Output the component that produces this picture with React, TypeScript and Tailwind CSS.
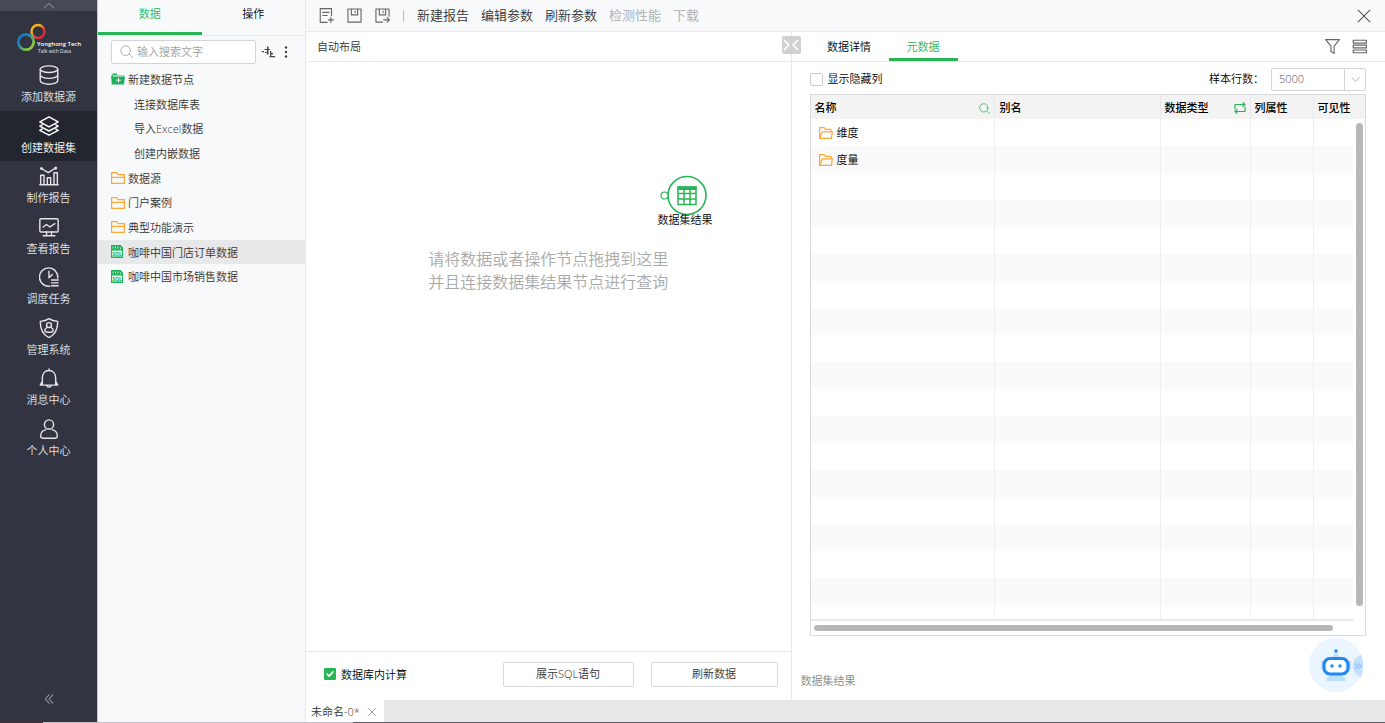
import { useState } from 'react';
import type { ReactNode } from 'react';
import clsx from 'clsx';

type IconProps = { children: ReactNode; className?: string };

// Shared 24x24 outline icon
function Icon({ children, className = 'size-5' }: IconProps) {
  return (
    <svg
      viewBox="0 0 24 24"
      className={className}
      fill="none"
      stroke="currentColor"
      strokeWidth="1.7"
      strokeLinecap="round"
      strokeLinejoin="round"
      aria-hidden="true"
    >
      {children}
    </svg>
  );
}

const navItems = [
  {
    label: '添加数据源',
    icon: (
      <>
        <ellipse cx="12" cy="5" rx="10.5" ry="4" />
        <path d="M1.5 5v14c0 2.200 4.700 4 10.500 4s10.500-1.800 10.500-4V5" />
        <path d="M1.500 12c0 2.200 4.700 4 10.500 4s10.500-1.800 10.500-4" />
      </>
    ),
  },
  {
    label: '创建数据集',
    icon: (
      <>
        <path d="M12 1 23 7 12 13 1 7z" />
        <path d="m4 10.500-3 1.700L12 18l11-5.800-3-1.700" />
        <path d="m4 15.500-3 1.700L12 23l11-5.800-3-1.700" />
      </>
    ),
  },
  {
    label: '制作报告',
    icon: (
      <>
        <path d="M2 22V11h4v11M10 22v-8h4v8M18 22V8h4v14M1 22.500h22" />
        <path d="m3 3 8 5 8-5" />
        <circle cx="3" cy="3" r="1" />
        <circle cx="20" cy="2.500" r="1" />
      </>
    ),
  },
  {
    label: '查看报告',
    icon: (
      <>
        <rect x="1" y="2" width="22" height="16" rx="1.500" />
        <path d="m5 12 4-3 4 3 6-4M9 18v4M15 18v4M5 22.500h14" />
      </>
    ),
  },
  {
    label: '调度任务',
    icon: (
      <>
        <path d="M13 23A11 11 0 1 1 22.500 13" />
        <path d="M12 5v8l4-4M15 15.500h8M15 19h8M15 22.500h8" />
      </>
    ),
  },
  {
    label: '管理系统',
    icon: (
      <>
        <path d="M12 .8c3 2.200 6.500 3 10.500 3.200 0 9-2.500 16-10.500 19.500C4 20 1.500 13 1.500 4 5.500 3.800 9 3 12 .8z" />
        <circle cx="12" cy="8.500" r="3" />
        <path d="M9.500 11.500c-3 1-3.500 5 0 5.500h5c3.500-.5 3-4.500 0-5.500" />
      </>
    ),
  },
  {
    label: '消息中心',
    icon: (
      <>
        <path d="M12 1v2M4 20V12c0-5 3-9 8-9s8 4 8 9v8M4 16l-2.500 4.500h21L20 16M9.500 20.500c0 3.300 5 3.300 5 0" />
      </>
    ),
  },
  {
    label: '个人中心',
    icon: (
      <>
        <circle cx="12" cy="6.500" r="5.500" />
        <path d="M8 13c-4 .6-6 4-6 7.500 0 1.500.8 2.500 2.500 2.500h15c1.700 0 2.500-1 2.500-2.500 0-3.500-2-6.900-6-7.500" />
      </>
    ),
  },
];

function Logo() {
  return (
    <svg viewBox="0 0 66 32" className="h-8 w-[66px]" role="img" aria-label="Yonghong Tech">
      <defs>
        <linearGradient id="warm" x1="0" y1="0" x2="1" y2="1">
          <stop offset="0.3" stopColor="#f5b51b" />
          <stop offset="0.7" stopColor="#e5293f" />
        </linearGradient>
        <linearGradient id="cool" x1="0" y1="0" x2="1" y2="1">
          <stop offset="0.3" stopColor="#1381bd" />
          <stop offset="0.8" stopColor="#8dc63f" />
        </linearGradient>
      </defs>
      <circle cx="22" cy="8.500" r="6.500" fill="none" stroke="url(#warm)" strokeWidth="2.400" />
      <circle cx="10" cy="19" r="7.700" fill="none" stroke="url(#cool)" strokeWidth="2.800" />
      <text x="21" y="23" fontSize="6" fontWeight="600" fill="#fff">Yonghong Tech</text>
      <text x="22" y="30" fontSize="5" fontWeight="400" fill="#e3e4e6">Talk with Data</text>
    </svg>
  );
}

function SideNav() {
  return (
    <aside className="flex w-[98px] shrink-0 flex-col border-r border-[#c4c6cb] bg-[#323541] text-[#e3e4e6]">
      <button type="button" aria-label="向上" className="flex h-[11px] shrink-0 items-center justify-center bg-[#474a55] text-[#9b9da4]">
        <Icon className="h-3 w-3"><path d="m2 16 10-9 10 9" strokeWidth="2" /></Icon>
      </button>
      <div className="flex h-[49px] shrink-0 justify-center pt-3">
        <Logo />
      </div>
      <nav className="grid h-[404px] shrink-0 grid-rows-8">
        {navItems.map((item) => (
          <a
            key={item.label}
            href="#"
            className={clsx(
              'flex flex-col items-center pt-[3px] text-[11px] leading-5',
              item.label === '创建数据集' && 'bg-[#24262f] text-white',
            )}
          >
            <span className="flex h-6 items-center"><Icon>{item.icon}</Icon></span>
            {item.label}
          </a>
        ))}
      </nav>
      <button type="button" aria-label="收起" className="mt-auto mb-[18px] flex justify-center text-[#9b9da4]">
        <Icon className="size-[10px]"><path d="m12 2-9 10 9 10M21 2l-9 10 9 10" strokeWidth="2.500" /></Icon>
      </button>
    </aside>
  );
}

function FolderIcon() {
  return (
    <svg viewBox="0 0 14 12" className="h-3 w-[14px]" fill="none" stroke="#f9a83a" aria-hidden="true">
      <path d="M.6 11.400V.6h5l1.500 2h6.300v8.800zM.6 5.400h12.800" strokeWidth="1.200" />
    </svg>
  );
}

function OpenFolderIcon() {
  return (
    <svg viewBox="0 0 14 12" className="h-3 w-[14px]" fill="none" stroke="#f9a83a" aria-hidden="true">
      <path d="M.6 11.400V.6h4.500l1.500 1.800h5.300v2.400M.8 11.400l2.400-6.600h10.200l-1 6.600z" strokeWidth="1.200" />
    </svg>
  );
}

function NewFolderIcon() {
  return (
    <svg viewBox="0 0 14 12" className="h-3 w-[14px]" aria-hidden="true">
      <path d="M0 2.500h1.500V.5h4l1 1.500h6v1.500H14L13 11.500H.8z" fill="#1fb25a" />
      <path d="M2 3h10M7.500 5v4.500M5.200 7.200h4.600" stroke="#fff" strokeWidth="1" />
    </svg>
  );
}

function SqlIcon() {
  return (
    <svg viewBox="0 0 24 26" className="h-[13px] w-3" aria-hidden="true">
      <path d="M0 0h19l5 5v21H0z" fill="#1fb25a" />
      <path d="M4 3v4M9 3v4M14 3v4M19 5v3" stroke="#fff" strokeWidth="1.500" />
      <path d="M2 11h20v12H2z" fill="#e3f6ea" />
      <text x="12" y="21" fontSize="10" fontWeight="700" textAnchor="middle" fill="#1fb25a">SQL</text>
    </svg>
  );
}

const treeRows = [
  { label: '新建数据节点', icon: <NewFolderIcon /> },
  { label: '连接数据库表' },
  { label: '导入Excel数据' },
  { label: '创建内嵌数据' },
  { label: '数据源', icon: <FolderIcon /> },
  { label: '门户案例', icon: <FolderIcon /> },
  { label: '典型功能演示', icon: <FolderIcon /> },
  { label: '咖啡中国门店订单数据', icon: <SqlIcon />, active: true },
  { label: '咖啡中国市场销售数据', icon: <SqlIcon /> },
];

function DataPanel() {
  return (
    <section className="flex w-[208px] shrink-0 flex-col border-r border-[#e6e8eb] bg-[#f8f9fb]">
      <div className="flex h-9 border-b border-[#e6e8eb] text-[11px]">
        <button type="button" className="w-1/2 border-b-[3px] border-[#27b556] pb-1 text-[#27b556]">数据</button>
        <button type="button" className="w-1/2 pb-[7px] text-black">操作</button>
      </div>
      <div className="flex h-[31px] items-center pl-[13px]">
        <label className="flex h-6 w-[145px] items-center gap-1 rounded-xs border border-[#d2d4d7] bg-white pl-2 text-[#aaa]">
          <Icon className="size-[13px] shrink-0"><circle cx="10.500" cy="10.500" r="9" /><path d="m17 17 6 6" /></Icon>
          <input type="text" aria-label="搜索" placeholder="输入搜索文字" className="w-full pt-px text-[11px] outline-none placeholder:text-[#a0a0a0]" />
        </label>
        <button type="button" aria-label="定位" className="ml-[6px] text-[#444]">
          <svg viewBox="0 0 13 12" className="h-3 w-[13px]" fill="currentColor" aria-hidden="true">
            <path d="M5 .5h1.500V3H8v1H6.500v4.500H5V7H3V6h2V4H2.500V3H5zM0 5h2v1.300H0zM8 5h1.300v2H11v1.200H9.300V10H13v1.300H7.500V10H8z" />
          </svg>
        </button>
        <button type="button" aria-label="更多" className="ml-[9px] text-[#444]">
          <svg viewBox="0 0 4 12" className="h-3 w-1" fill="currentColor" aria-hidden="true">
            <circle cx="2" cy="1.500" r="1.200" /><circle cx="2" cy="6" r="1.200" /><circle cx="2" cy="10.500" r="1.200" />
          </svg>
        </button>
      </div>
      <ul className="grid h-[222px] grid-rows-9 text-[11px] text-[#333]">
        {treeRows.map((row) => (
          <li key={row.label} className={clsx('flex items-center gap-[3px]', row.icon ? 'pl-[13px]' : 'pl-9', row.active && 'bg-[#e7e8ea]')}>
            {row.icon && <span className="flex w-[14px]">{row.icon}</span>}
            <span className="pt-[2px]">{row.label}</span>
          </li>
        ))}
      </ul>
    </section>
  );
}

function Toolbar() {
  return (
    <header className="flex h-8 shrink-0 items-center border-b border-[#e6e8eb] bg-[#f8f9fb] pr-[14px] pl-[13px] text-[13px] text-[#333]">
      <div className="flex items-center gap-[13px] text-[#666]">
        <button type="button" aria-label="新建">
          <Icon className="size-[15px]"><path d="M20 12V1H2v22h11M6 7h10M6 12h7M19 15v8M15 19h8" strokeWidth="1.800" /></Icon>
        </button>
        <button type="button" aria-label="保存">
          <Icon className="size-[15px]"><path d="M1.500 1.500h21v21h-21zM7 2v9h10V2M13 5v2" strokeWidth="1.800" /></Icon>
        </button>
        <button type="button" aria-label="另存为">
          <Icon className="size-[15px]"><path d="M22.500 13V1.500h-21v21H12M7 2v9h10V2M13 5v2M14 19h9M19.500 15.500 23 19l-3.500 3.500" strokeWidth="1.800" /></Icon>
        </button>
      </div>
      <span className="mx-[13px] h-3 w-px bg-[#b5b7ba]" />
      <div className="flex gap-3">
        <button type="button">新建报告</button>
        <button type="button">编辑参数</button>
        <button type="button">刷新参数</button>
        <button type="button" disabled className="text-[#aaacaf]">检测性能</button>
        <button type="button" disabled className="text-[#aaacaf]">下载</button>
      </div>
      <button type="button" aria-label="关闭" className="ml-auto text-[#555]">
        <Icon className="size-[14px]"><path d="m2 2 20 20M22 2 2 22" strokeWidth="1.800" /></Icon>
      </button>
    </header>
  );
}

function Canvas() {
  const [inDb, setInDb] = useState(true);

  return (
    <section className="flex w-[45%] shrink-0 flex-col border-r border-[#e6e8eb]">
      <div className="flex h-[30px] shrink-0 items-center border-b border-[#e6e8eb] pt-px pl-[11px] text-[11px] text-[#333]">自动布局</div>
      <div className="relative flex-1">
        <p className="pt-[186px] text-center text-base leading-[23px] text-[#aaa]">
          请将数据或者操作节点拖拽到这里
          <br />
          并且连接数据集结果节点进行查询
        </p>
        {/* Result node on the canvas */}
        <div className="absolute top-[113px] left-[351px] flex flex-col items-center text-[11px] leading-4 text-black">
          <svg viewBox="0 0 56 41" className="-mb-1 h-[41px] w-14" fill="none" stroke="#27b556" aria-hidden="true">
            <circle cx="30" cy="20.500" r="19" strokeWidth="1.600" />
            <circle cx="7.500" cy="20.500" r="3.500" strokeWidth="1.200" fill="#fff" />
            <path d="M21 12h18v17.500H21zM21 18.500h18M21 24h18M27 15v14.500M33 15v14.500" strokeWidth="1.500" />
            <path d="M20.500 11.500h19V15h-19z" fill="#27b556" stroke="none" />
          </svg>
          <span className="relative">数据集结果</span>
        </div>
      </div>
      <div className="flex h-[49px] shrink-0 items-center border-t border-[#e6e8eb] pr-[13px] pb-1 pl-[18px] text-[11px] text-black">
        <label className="flex items-center gap-[5px]">
          <span className="grid place-items-center">
            <input
              type="checkbox"
              checked={inDb}
              onChange={(e) => setInDb(e.target.checked)}
              className="col-start-1 row-start-1 size-3 appearance-none rounded-[1px] border border-[#c4c6cb] checked:border-[#27b556] checked:bg-[#27b556]"
            />
            <Icon className="pointer-events-none col-start-1 row-start-1 size-[10px] text-white">
              <path d="m5 12 5 5 9-10" strokeWidth="4" />
            </Icon>
          </span>
          <span className="pt-[2px]">数据库内计算</span>
        </label>
        <button type="button" className="ml-auto h-[25px] w-[131px] rounded-xs border border-[#d8dadd] text-[#333]">展示SQL语句</button>
        <button type="button" className="ml-[17px] h-[25px] w-[127px] rounded-xs border border-[#d8dadd] text-[#333]">刷新数据</button>
      </div>
    </section>
  );
}

const metaRows = ['维度', '度量', ...Array(17).fill('')];

function MetaTable() {
  return (
    <div className="relative min-h-0 flex-1 overflow-hidden border border-[#d8dadd]">
      <div className="flex h-full flex-col">
        <div className="min-h-0 flex-1 overflow-hidden bg-[linear-gradient(#f3f3f3,#f3f3f3)] bg-[length:100%_24px] bg-no-repeat pr-3 text-[11px] text-black">
          <table className="w-full table-fixed border-collapse">
            <colgroup>
              <col className="w-[34%]" />
              <col />
              <col className="w-[90px]" />
              <col className="w-[63px]" />
              <col className="w-[40px]" />
            </colgroup>
            <thead>
              <tr className="h-6 text-left">
                <th className="border-r border-[#e6e8eb] px-1 pt-[2px] font-medium">
                  <span className="flex items-center justify-between">
                    名称
                    <Icon className="size-[11px] text-[#27b556]"><circle cx="10.500" cy="10.500" r="9" /><path d="m17 17 6 6" /></Icon>
                  </span>
                </th>
                <th className="border-r border-[#e6e8eb] px-1 pt-[2px] font-medium">别名</th>
                <th className="border-r border-[#e6e8eb] px-1 pt-[2px] font-medium">
                  <span className="flex items-center justify-between">
                    数据类型
                    <Icon className="size-3 text-[#27b556]"><path d="M2 14V5h20M18 1.500 22 5l-4 3.500M22 10v9H2M6 15.500 2 19l4 3.500" strokeWidth="2.400" /></Icon>
                  </span>
                </th>
                <th className="border-r border-[#e6e8eb] px-1 pt-[2px] font-medium">列属性</th>
                <th className="pt-[2px] pl-1 font-medium whitespace-nowrap">可见性</th>
              </tr>
            </thead>
            <tbody>
              {metaRows.map((name, i) => (
                <tr key={i} className="h-[27px] even:bg-[#fafafa]">
                  <td className="border-r border-[#eeeff1] pl-2">
                    {name && (
                      <span className="flex items-center gap-1">
                        <OpenFolderIcon />
                        <span className="pt-[2px]">{name}</span>
                      </span>
                    )}
                  </td>
                  <td className="border-r border-[#eeeff1]" />
                  <td className="border-r border-[#eeeff1]" />
                  <td className="border-r border-[#eeeff1]" />
                  <td />
                </tr>
              ))}
            </tbody>
          </table>
        </div>
        <div className="mr-3 h-[2px] shrink-0 bg-[#e9e9e9]" />
        <div className="h-[14px] shrink-0 pt-1 pr-8 pl-[3px]">
          <div className="h-[6px] rounded-full bg-[#b7b7b7]" />
        </div>
      </div>
      <div className="absolute top-7 right-[2px] bottom-[29px] w-[7px] rounded-full bg-[#b7b7b7]" />
    </div>
  );
}

function Robot() {
  return (
    <svg viewBox="0 0 56 56" className="size-14" aria-hidden="true">
      <circle cx="28" cy="28" r="27" fill="#eaf5ff" />
      <path d="M53 17.500c-11 5-11 18 0 23 2.600-7 2.600-16 0-23z" fill="#c3e0ff" />
      <path d="m47 26.500 2.500 2.700-2.500 2.700M50.500 26.500l2.500 2.700-2.500 2.700" fill="none" stroke="#8cc2fa" strokeWidth="1.200" />
      <path d="M18 44c1-5 4-6 10-6s9 1 10 6z" fill="#bfdfff" />
      <path d="m24 20 4-5 4 5zM15 24h-2v8h2zM41 24h2v8h-2z" fill="#c3e0ff" />
      <rect x="16" y="21.500" width="24" height="15.500" rx="6" fill="#fff" stroke="#1e88f5" strokeWidth="3.200" />
      <circle cx="28" cy="14" r="1.700" fill="#1e88f5" />
      <circle cx="24" cy="29" r="1.700" fill="#1e88f5" />
      <circle cx="32" cy="29" r="1.700" fill="#1e88f5" />
    </svg>
  );
}

function MetaPanel() {
  const [showHidden, setShowHidden] = useState(false);

  return (
    <section className="relative flex min-w-0 flex-1 flex-col">
      <div className="flex h-[30px] shrink-0 border-b border-[#e6e8eb] pr-[18px] pl-[18px] text-[11px]">
        <button type="button" className="w-[79px] pt-[2px] text-black">数据详情</button>
        <button type="button" className="w-[69px] border-b-[3px] border-[#27b556] pt-[5px] text-[#27b556]">元数据</button>
        <div className="ml-auto flex items-center gap-3 text-[#666]">
          <button type="button" aria-label="筛选">
            <Icon className="size-[15px]"><path d="M1 1h22l-8.500 10.500V23l-5-3v-8.500z" strokeWidth="1.800" /></Icon>
          </button>
          <button type="button" aria-label="列表">
            <Icon className="size-[15px]"><path d="M2 2h21v4.500H2zM2 9.800h21v4.500H2zM2 17.600h21V22H2z" strokeWidth="1.900" /></Icon>
          </button>
        </div>
      </div>
      <div className="flex min-h-0 flex-1 flex-col pr-[19px] pl-[18px]">
        <div className="flex h-8 shrink-0 items-center justify-between pt-[3px] text-[11px] text-black">
          <label className="flex items-center gap-[5px]">
            <input
              type="checkbox"
              checked={showHidden}
              onChange={(e) => setShowHidden(e.target.checked)}
              className="size-[13px] appearance-none rounded-xs border border-[#c9cbce] checked:bg-[#27b556]"
            />
            显示隐藏列
          </label>
          <label className="flex items-center gap-[7px]">
            样本行数：
            <span className="relative flex text-[#555]">
              <select className="h-[23px] w-[95px] appearance-none rounded-xs border border-[#d2d4d7] bg-white pl-[7px]" defaultValue="5000">
                <option>5000</option>
              </select>
              <span className="pointer-events-none absolute inset-y-0 right-0 flex w-[22px] items-center justify-center border-l border-[#d2d4d7] text-[#bbb]">
                <Icon className="size-[9px]"><path d="m2 7 10 10L22 7" strokeWidth="2.500" /></Icon>
              </span>
            </span>
          </label>
        </div>
        <MetaTable />
      </div>
      <footer className="flex h-16 shrink-0 items-center pt-[27px] pl-[9px] text-[11px] text-[#888]">数据集结果</footer>
      <button type="button" aria-label="智能助手" className="absolute right-[21px] bottom-[7px]">
        <Robot />
      </button>
      {/* Handle that sits on the divider between the two panes */}
      <button type="button" aria-label="折叠面板" className="absolute top-1 -left-[10px] flex h-[18px] w-[19px] items-center justify-center rounded-xs bg-[#d0d0d0] text-white">
        <Icon className="h-4 w-4"><path d="m2 5 7 7-7 7M22 5l-7 7 7 7" strokeWidth="2.400" /></Icon>
      </button>
    </section>
  );
}

export default function App() {
  return (
    <div className="flex h-screen flex-col overflow-hidden bg-white font-['Open_Sans','Noto_Sans_CJK_SC',sans-serif] font-[350]">
      <div className="flex min-h-0 flex-1">
        <SideNav />
        <DataPanel />
        <main className="flex min-w-0 flex-1 flex-col">
          <Toolbar />
          <div className="flex min-h-0 flex-1">
            <Canvas />
            <MetaPanel />
          </div>
          <div className="flex h-[22px] shrink-0 bg-[#e7e8ea] text-[11px] text-[#333]">
            <div className="flex items-center gap-2 bg-white pt-[2px] pr-2 pl-[5px]">
              未命名-0*
              <button type="button" aria-label="关闭标签" className="text-[#999]">
                <Icon className="size-2"><path d="m2 2 20 20M22 2 2 22" strokeWidth="2.800" /></Icon>
              </button>
            </div>
          </div>
        </main>
      </div>
      <div className="flex h-px shrink-0 bg-[#5c5c66]">
        <div className="w-[43px] bg-[#3a3038]" />
        <div className="w-[310px] bg-[#bfc0c3]" />
      </div>
    </div>
  );
}
